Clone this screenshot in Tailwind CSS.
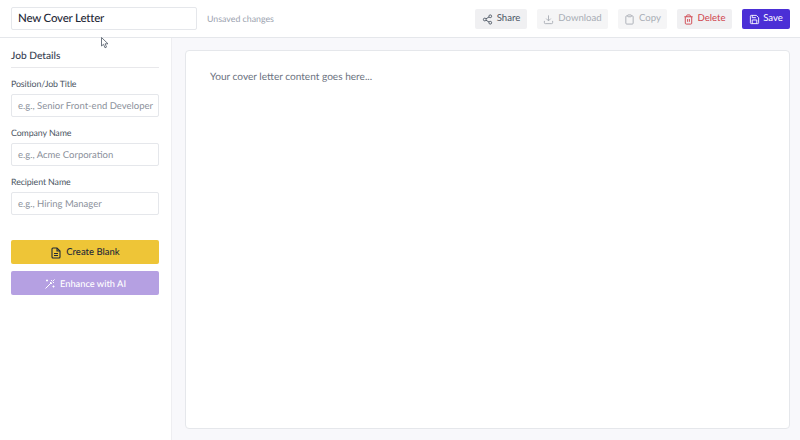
<!DOCTYPE html>
<html><head><meta charset="utf-8"><script src="https://cdn.jsdelivr.net/npm/@tailwindcss/browser@4"></script></head>
<body class="m-0">
<div class="relative w-[800px] h-[440px] overflow-hidden bg-white flex flex-col font-['Lato','Noto_Sans',sans-serif] text-[#1f2937] [text-rendering:geometricPrecision]">
  <header class="h-[38px] shrink-0 flex items-center justify-between pl-[11px] pr-[10px] bg-white border-b border-[#e5e7eb]">
    <div class="flex items-center gap-[10px]">
      <div class="w-[186px] h-[23px] border border-[#e5e7eb] rounded-[2px] pl-[6px] flex items-center text-[11.5px] tracking-[-0.2px] font-medium text-[#1f2937] whitespace-nowrap">New Cover Letter</div>
      <span class="text-[8.8px] text-[#9ca3af] whitespace-nowrap">Unsaved changes</span>
    </div>
    <div class="flex items-center gap-[10px] text-[9.6px] whitespace-nowrap">
      <div class="w-[52px] h-[20px] rounded-[2px] bg-[#f0f0f2] pt-[2px] flex items-center justify-center gap-[4px] text-[#4b5563]">
        <svg width="11" height="11" viewBox="0 0 24 24" fill="none" stroke="currentColor" stroke-width="2"><circle cx="18" cy="5" r="3"/><circle cx="6" cy="12" r="3"/><circle cx="18" cy="19" r="3"/><path d="M8.6 13.5l6.8 4M15.4 6.500l-6.800 4"/></svg>Share</div>
      <div class="w-[71px] h-[20px] rounded-[2px] bg-[#f5f5f6] pt-[2px] flex items-center justify-center gap-[4px] text-[#a8adb5]">
        <svg width="11" height="11" viewBox="0 0 24 24" fill="none" stroke="currentColor" stroke-width="2"><path d="M21 15v4a2 2 0 0 1-2 2H5a2 2 0 0 1-2-2v-4M7 10l5 5 5-5M12 15V3"/></svg>Download</div>
      <div class="w-[49px] h-[20px] rounded-[2px] bg-[#f5f5f6] pt-[2px] flex items-center justify-center gap-[4px] text-[#a8adb5]">
        <svg width="11" height="11" viewBox="0 0 24 24" fill="none" stroke="currentColor" stroke-width="2"><rect x="8" y="2" width="8" height="4" rx="1"/><path d="M16 4h2a2 2 0 0 1 2 2v14a2 2 0 0 1-2 2H6a2 2 0 0 1-2-2V6a2 2 0 0 1 2-2h2"/></svg>Copy</div>
      <div class="w-[55px] h-[20px] rounded-[2px] bg-[#f0f0f2] pt-[2px] flex items-center justify-center gap-[3px] text-[#cf434b]">
        <svg width="11" height="11" viewBox="0 0 24 24" fill="none" stroke="currentColor" stroke-width="2"><path d="M3 6h18M19 6v14a2 2 0 0 1-2 2H7a2 2 0 0 1-2-2V6M8 6V4a2 2 0 0 1 2-2h4a2 2 0 0 1 2 2v2M10 11v6M14 11v6"/></svg>Delete</div>
      <div class="w-[48px] h-[20px] rounded-[2px] bg-[#4b2fd6] pt-[2px] flex items-center justify-center gap-[3px] text-white">
        <svg width="11" height="11" viewBox="0 0 24 24" fill="none" stroke="currentColor" stroke-width="2"><path d="M19 21H5a2 2 0 0 1-2-2V5a2 2 0 0 1 2-2h11l5 5v11a2 2 0 0 1-2 2z"/><path d="M17 21v-8H7v8M7 3v5h8"/></svg>Save</div>
    </div>
  </header>
  <div class="flex-1 flex min-h-0">
    <aside class="w-[172px] shrink-0 border-r border-[#eeeef1] bg-white pl-[11px] pr-[12px] pt-[11px]">
      <h2 class="text-[10.2px] font-medium leading-[14px] text-[#374151] mb-[9px] border-b border-[#e8e8eb] h-[19px]">Job Details</h2>
      <div class="flex flex-col gap-[9px]">
        <div class="flex flex-col gap-[4px]">
          <label class="text-[8.8px] leading-[13px] tracking-[-0.1px] text-[#4b5563]">Position/Job Title</label>
          <div class="h-[23px] border border-[#e5e7eb] rounded-[2px] pl-[6px] pt-[3px] flex items-center text-[9.5px] text-[#8b919b] whitespace-nowrap">e.g., Senior Front-end Developer</div>
        </div>
        <div class="flex flex-col gap-[4px]">
          <label class="text-[8.8px] leading-[13px] tracking-[-0.1px] text-[#4b5563]">Company Name</label>
          <div class="h-[23px] border border-[#e5e7eb] rounded-[2px] pl-[6px] pt-[3px] flex items-center text-[9.5px] text-[#8b919b] whitespace-nowrap">e.g., Acme Corporation</div>
        </div>
        <div class="flex flex-col gap-[4px]">
          <label class="text-[8.8px] leading-[13px] tracking-[-0.1px] text-[#4b5563]">Recipient Name</label>
          <div class="h-[23px] border border-[#e5e7eb] rounded-[2px] pl-[6px] pt-[3px] flex items-center text-[9.5px] text-[#8b919b] whitespace-nowrap">e.g., Hiring Manager</div>
        </div>
      </div>
      <div class="mt-[25px] flex flex-col gap-[7px]">
        <div class="h-[24px] rounded-[2px] bg-[#eec537] pt-[2px] flex items-center justify-center gap-[4px] text-[9.5px] font-medium text-[#1f2937]">
          <svg width="12" height="12" viewBox="0 0 24 24" fill="none" stroke="currentColor" stroke-width="2.2"><path d="M14 2H6a2 2 0 0 0-2 2v16a2 2 0 0 0 2 2h12a2 2 0 0 0 2-2V8z"/><path d="M14 2v6h6M8 13h8M8 17h8"/></svg>Create Blank</div>
        <div class="h-[24px] rounded-[2px] bg-[#b5a0e2] pt-[2px] flex items-center justify-center gap-[4px] text-[9.3px] font-medium text-white">
          <svg width="12" height="12" viewBox="0 0 24 24" fill="none" stroke="currentColor" stroke-width="2"><path d="M3 21L15 9M17 7l4-4M15 4v2M18 9h2M6 3v4M4 5h4M19 15v4M17 17h4"/><path d="M12 8l4 4"/></svg>Enhance with AI</div>
      </div>
    </aside>
    <main class="flex-1 bg-[#f8f8fb] pl-[13px] pr-[10px] pt-[12px] pb-[11px]">
      <div class="h-full bg-white border border-[#e5e7eb] rounded-[4px] pl-[24px] pt-[19px] text-[10.1px] leading-[14px] text-[#6b7280] whitespace-nowrap">Your cover letter content goes here...</div>
    </main>
  </div>
  <svg class="absolute left-[101px] top-[37px]" width="9" height="12" viewBox="0 0 9 12"><path d="M0.500 0.500V9L2.500 7.300L4 10.800L5.500 10.100L4.100 6.800H7z" fill="#fff" stroke="#4b5563" stroke-width="0.800"/></svg>
</div>
</body></html>
